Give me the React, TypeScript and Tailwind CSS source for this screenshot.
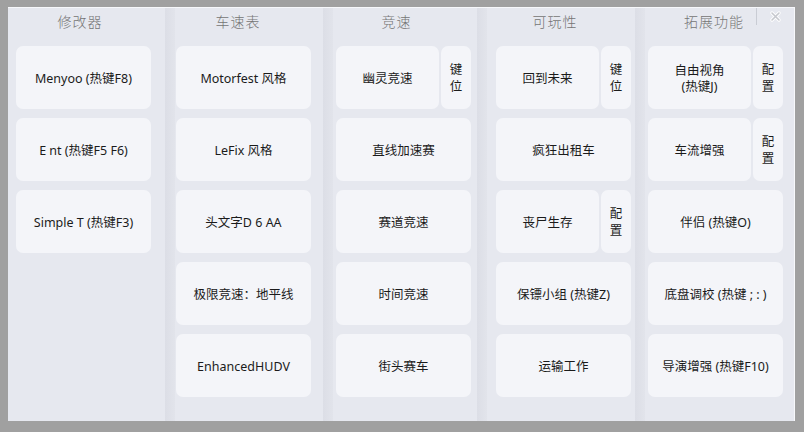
type Item = { label: string; side?: string };

type Column = {
  title: string;
  width: string;
  inset: string;
  titlePad: string;
  items: Item[];
};

const columns: Column[] = [
  {
    title: "修改器",
    width: "w-[157px]",
    inset: "ml-[8px]",
    titlePad: "pr-[7px]",
    items: [
      { label: "Menyoo (热键F8)" },
      { label: "E nt (热键F5 F6)" },
      { label: "Simple T (热键F3)" },
    ],
  },
  {
    title: "车速表",
    width: "w-[148px]",
    inset: "ml-[1px]",
    titlePad: "pr-[11px]",
    items: [
      { label: "Motorfest 风格" },
      { label: "LeFix 风格" },
      { label: "头文字D 6 AA" },
      { label: "极限竞速：地平线" },
      { label: "EnhancedHUDV" },
    ],
  },
  {
    title: "竞速",
    width: "w-[144px]",
    inset: "ml-[3px]",
    titlePad: "pr-[14px]",
    items: [
      { label: "幽灵竞速", side: "键位" },
      { label: "直线加速赛" },
      { label: "赛道竞速" },
      { label: "时间竞速" },
      { label: "街头赛车" },
    ],
  },
  {
    title: "可玩性",
    width: "w-[148px]",
    inset: "ml-[9px]",
    titlePad: "pr-[17px]",
    items: [
      { label: "回到未来", side: "键位" },
      { label: "疯狂出租车" },
      { label: "丧尸生存", side: "配置" },
      { label: "保镖小组 (热键Z)" },
      { label: "运输工作" },
    ],
  },
  {
    title: "拓展功能",
    width: "w-[150px]",
    inset: "ml-[3px]",
    titlePad: "pr-[3px]",
    items: [
      { label: "自由视角\n(热键J)", side: "配置" },
      { label: "车流增强", side: "配置" },
      { label: "伴侣 (热键O)" },
      { label: "底盘调校 (热键 ; : )" },
      { label: "导演增强 (热键F10)" },
    ],
  },
];

const cardFont = {
  fontFamily: '"Noto Sans", "Noto Sans CJK SC", sans-serif',
};

function Card({ item }: { item: Item }) {
  if (item.side) {
    return (
      <div className="flex h-[63px] w-[135px] gap-[2px]">
        <div className="flex flex-1 items-center justify-center whitespace-pre-line rounded-[7px] bg-[#f4f5f9] pt-[2px] text-center text-[12.5px] leading-[16px] text-[#1b1b1b]">
          {item.label}
        </div>
        <div className="flex w-[30px] flex-col items-center justify-center rounded-[7px] bg-[#f4f5f9] text-[12.5px] leading-[17px] text-[#1b1b1b]">
          {item.side.split("").map((ch) => (
            <span key={ch}>{ch}</span>
          ))}
        </div>
      </div>
    );
  }
  return (
    <div className="flex h-[63px] w-[135px] items-center justify-center rounded-[7px] bg-[#f4f5f9] pt-[2px] text-center text-[12.5px] leading-[16px] text-[#1b1b1b]">
      {item.label}
    </div>
  );
}

function Divider() {
  return <div className="w-[10px] shrink-0 bg-gradient-to-r from-[#dcdee6] to-[#e2e4eb]" />;
}

export default function App() {
  return (
    <div className="h-[432px] w-[804px] bg-[#a0a0a0] pl-[8px] pt-[7px]" style={cardFont}>
      <div className="relative flex h-[414px] w-[787px] border-t border-r border-[#f7f8fb] bg-[#e6e8ef]">
        {columns.map((col, i) => (
          <div key={col.title} className="flex">
            {i > 0 && <Divider />}
            <div className={`${col.width} flex shrink-0 flex-col`}>
              <div className={`${col.inset} flex h-[38px] w-[135px] items-start justify-center pt-[3px] ${col.titlePad}`}>
                <span
                  className="text-[14px] leading-[20px] tracking-[1px] text-[#757575]"
                  style={{ fontFamily: '"Noto Sans CJK SC", sans-serif', fontWeight: 300 }}
                >
                  {col.title}
                </span>
              </div>
              <div className={`${col.inset} flex flex-col gap-[9px]`}>
                {col.items.map((item) => (
                  <Card key={item.label} item={item} />
                ))}
              </div>
            </div>
          </div>
        ))}

        {/* close box in the top-right corner */}
        <div className="absolute right-0 top-0 flex h-[17px] w-[38px] items-center justify-center border-l border-[#c9ccd4]">
          <svg width="11" height="11" viewBox="0 0 11 11">
            <path d="M2 2 L9 9 M9 2 L2 9" stroke="#ffffff" strokeWidth="3.2" strokeLinecap="round" />
            <path d="M2 2 L9 9 M9 2 L2 9" stroke="#c6c8ce" strokeWidth="1.6" strokeLinecap="round" />
          </svg>
        </div>
      </div>
    </div>
  );
}
